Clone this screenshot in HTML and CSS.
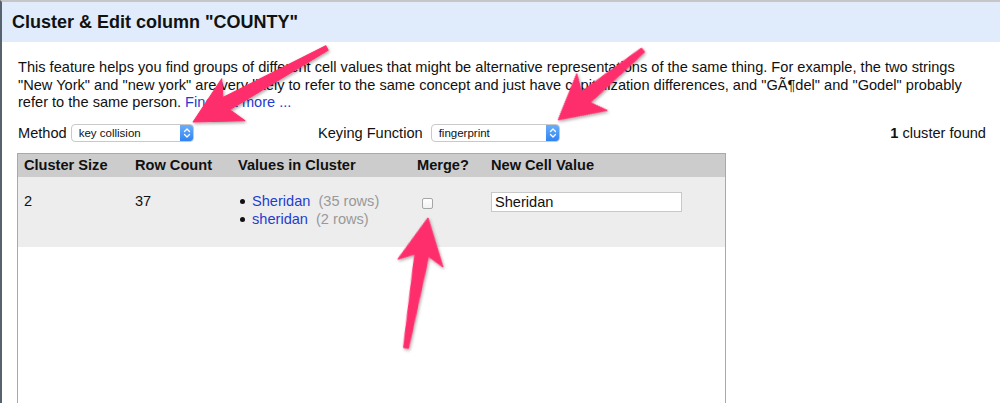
FILE: index.html
```html
<!DOCTYPE html>
<html>
<head>
<meta charset="utf-8">
<title>Cluster &amp; Edit</title>
<link rel="stylesheet" href="styles.css">
</head>
<body>
<div class="dialog">
  <div class="dlg-header">Cluster &amp; Edit column "COUNTY"</div>
  <div class="dlg-body">
    <p class="intro">This feature helps you find groups of different cell values that might be alternative representations of the same thing. For example, the two strings<br>"New York" and "new york" are very likely to refer to the same concept and just have capitalization differences, and "GÃ¶del" and "Godel" probably<br>refer to the same person. <a class="link" href="#">Find out more ...</a></p>
    <div class="controls">
      <div class="ctl-group method">
        <span class="ctl-label">Method</span>
        <div class="select sel-method"><span class="sel-text">key collision</span><span class="sel-btn"><svg width="8" height="12" viewBox="0 0 8 12"><path d="M1.5 4.5 L4 2 L6.5 4.5 M1.5 7.5 L4 10 L6.5 7.5" fill="none" stroke="#fff" stroke-width="1.3" stroke-linecap="round" stroke-linejoin="round"/></svg></span></div>
      </div>
      <div class="ctl-group keying">
        <span class="ctl-label">Keying Function</span>
        <div class="select sel-key"><span class="sel-text">fingerprint</span><span class="sel-btn"><svg width="8" height="12" viewBox="0 0 8 12"><path d="M1.5 4.5 L4 2 L6.5 4.5 M1.5 7.5 L4 10 L6.5 7.5" fill="none" stroke="#fff" stroke-width="1.3" stroke-linecap="round" stroke-linejoin="round"/></svg></span></div>
      </div>
      <div class="found"><b>1</b> cluster found</div>
    </div>
    <div class="table-wrap">
      <table class="clusters">
        <colgroup>
          <col class="c1"><col class="c2"><col class="c3"><col class="c4"><col class="c5">
        </colgroup>
        <thead>
          <tr><th>Cluster Size</th><th>Row Count</th><th>Values in Cluster</th><th>Merge?</th><th>New Cell Value</th></tr>
        </thead>
        <tbody>
          <tr>
            <td>2</td>
            <td>37</td>
            <td>
              <ul class="values">
                <li><a class="link" href="#">Sheridan</a><span class="rows">(35 rows)</span></li>
                <li><a class="link" href="#">sheridan</a><span class="rows">(2 rows)</span></li>
              </ul>
            </td>
            <td><span class="checkbox"></span></td>
            <td><input class="newval" type="text" value="Sheridan"></td>
          </tr>
        </tbody>
      </table>
    </div>
  </div>
</div>
<svg class="annot" width="1000" height="403" viewBox="0 0 1000 403">
  <defs>
    <filter id="sh" x="-20%" y="-20%" width="140%" height="140%">
      <feDropShadow dx="1" dy="1.5" stdDeviation="1.4" flood-color="#000" flood-opacity="0.35"/>
    </filter>
  </defs>
  <g fill="#fe2f6c" stroke="#fe2f6c" stroke-width="1" stroke-linejoin="round" filter="url(#sh)">
    <polygon transform="translate(327 48) rotate(151.1)" points="0,-2.5 115,-7 107,-24 153,0 107,24 115,7 0,2.5"/>
    <polygon transform="translate(643 50) rotate(140.5)" points="0,-2.5 74,-7 66,-24 110,0 66,24 74,7 0,2.5"/>
    <polygon transform="translate(406 348) rotate(-80.4)" points="0,-2.5 94,-7 86,-23 132,0 86,23 94,7 0,2.5"/>
  </g>
</svg>
</body>
</html>
```

FILE: styles.css
```css
html, body {
  margin: 0;
  padding: 0;
  height: 100%;
  overflow: hidden;
}
body {
  font-family: "Liberation Sans", Arial, Helvetica, sans-serif;
  color: #111;
  background: #fff;
  position: relative;
}
.dialog {
  height: 100%;
  box-sizing: border-box;
  border-top: 2px solid #c6c6c6;
  border-left: 2px solid #56626e;
  display: flex;
  flex-direction: column;
}
.dlg-header {
  background: #e0ecfc;
  height: 40px;
  line-height: 40px;
  padding-left: 10px;
  font-size: 18px;
  font-weight: bold;
  color: #111;
}
.dlg-body {
  flex: 1;
  display: flex;
  flex-direction: column;
  padding: 0 14px 0 16px;
  min-height: 0;
}
.intro {
  margin: 17px 0 0 0;
  font-size: 14.6px;
  line-height: 17.5px;
  white-space: nowrap;
}
.link {
  color: #1f3dcf;
  text-decoration: none;
}
.controls {
  display: flex;
  align-items: center;
  height: 20px;
  margin-top: 11px;
  font-size: 14.6px;
}
.ctl-group {
  display: flex;
  align-items: center;
}
.method {
  width: 300px;
}
.ctl-label {
  margin-right: 4px;
}
.keying .ctl-label {
  margin-right: 8px;
}
.select {
  box-sizing: border-box;
  height: 18px;
  border: 1px solid #c9c9c9;
  border-radius: 4px;
  background: #fff;
  display: flex;
  align-items: center;
  justify-content: space-between;
  font-size: 11.5px;
  overflow: hidden;
}
.sel-method { width: 123px; }
.sel-key { width: 129px; }
.sel-text {
  padding-left: 7px;
  line-height: 16px;
}
.sel-btn {
  width: 14px;
  height: 18px;
  margin: -1px -1px -1px 0;
  background: linear-gradient(#6cb2fb, #2d80f2);
  border-radius: 0 4px 4px 0;
  display: flex;
  align-items: center;
  justify-content: center;
}
.found {
  margin-left: auto;
}
.table-wrap {
  margin-top: 10px;
  margin-left: -1px;
  width: 709px;
  box-sizing: border-box;
  flex: 1;
  border: 1px solid #a9a9a9;
  border-bottom: none;
}
.clusters {
  width: 707px;
  border-collapse: collapse;
  table-layout: fixed;
  font-size: 14.6px;
}
.c1 { width: 111px; }
.c2 { width: 103px; }
.c3 { width: 179px; }
.c4 { width: 74px; }
.c5 { width: 240px; }
.clusters th {
  background: #cccccc;
  text-align: left;
  font-weight: bold;
  height: 23px;
  padding: 0 6px;
  line-height: 23px;
  white-space: nowrap;
}
.clusters td {
  background: #ededed;
  vertical-align: top;
  padding: 15px 6px 19px 6px;
  line-height: 18px;
}
.values {
  list-style: none;
  margin: 0;
  padding: 0;
}
.values li {
  position: relative;
  padding-left: 14px;
  white-space: nowrap;
}
.values li::before {
  content: "";
  position: absolute;
  left: 2px;
  top: 7px;
  width: 5px;
  height: 5px;
  border-radius: 50%;
  background: #111;
}
.rows {
  color: #999;
  margin-left: 8px;
}
.checkbox {
  display: block;
  width: 11px;
  height: 11px;
  box-sizing: border-box;
  margin: 6px 0 0 5px;
  border: 1px solid #a6a6a6;
  border-radius: 2px;
  background: linear-gradient(#fff, #f2f2f2);
}
.newval {
  display: block;
  box-sizing: border-box;
  width: 191px;
  height: 20px;
  margin: 0;
  padding: 0 3px;
  border: 1px solid #c8c8c8;
  font-family: "Liberation Sans", Arial, sans-serif;
  font-size: 14.6px;
  color: #111;
  background: #fff;
}
.annot {
  position: absolute;
  left: 0;
  top: 0;
  pointer-events: none;
}
```
